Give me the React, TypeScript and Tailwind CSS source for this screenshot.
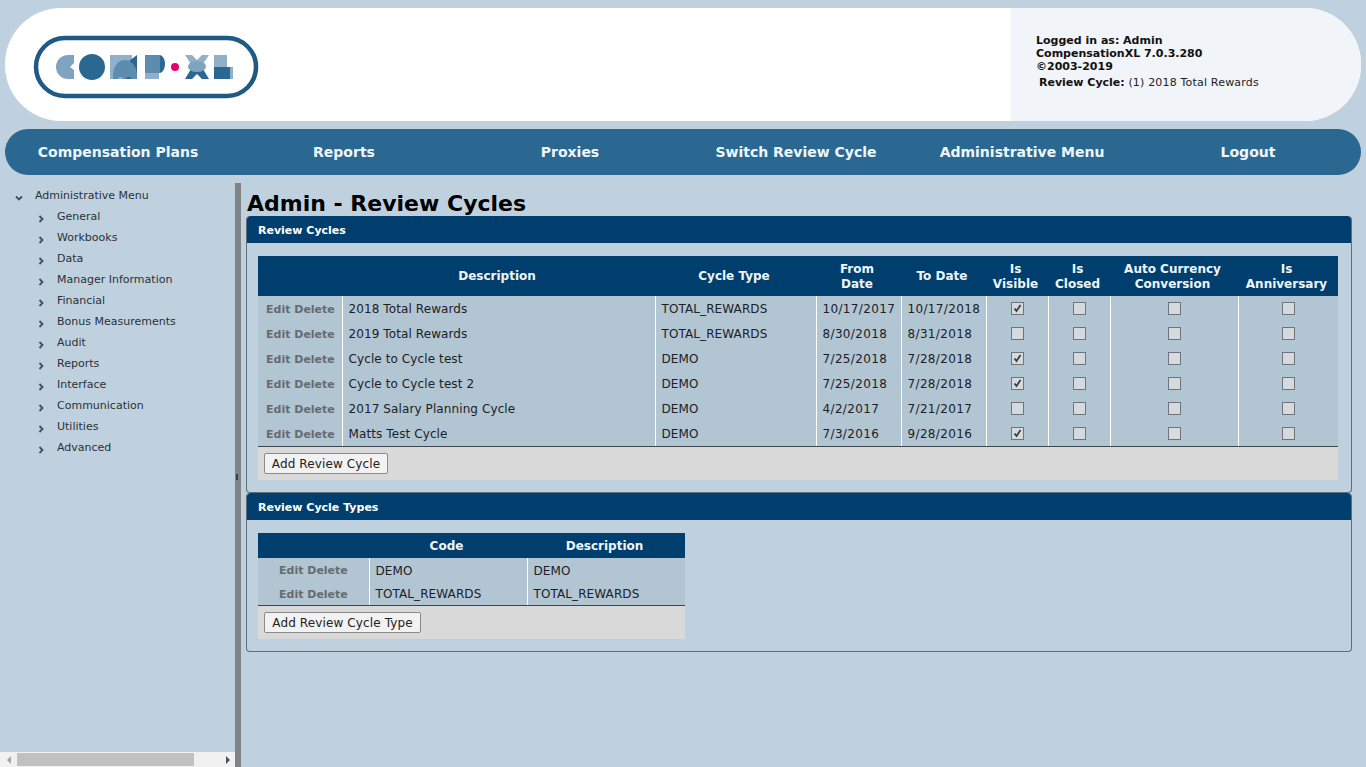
import React from "react";

const font = { fontFamily: '"DejaVu Sans", Verdana, sans-serif' };

function Logo() {
  return (
    <svg width="226" height="64" viewBox="33 35 226 64" className="block">
      <rect x="36" y="38" width="220" height="58" rx="29" fill="#fff" stroke="#1f5a85" strokeWidth="4.5" />
      {/* C */}
      <path d="M68 55h6v8l-4 4 4 3v9h-6a12 12 0 0 1 0-24z" fill="#7ea4bf" />
      {/* O */}
      <circle cx="92" cy="67" r="13" fill="#2b6891" />
      {/* M */}
      <rect x="110" y="55" width="22" height="24" fill="#8fb0c8" />
      <path d="M137 55v24h-12v-15z" fill="#2b6891" />
      <path d="M113 79v-4a12 15 0 0 1 24 0v4h-6l-1-2h-3l-1 2h-3l-1-2h-3l-1 2z" fill="#5c8cae" />
      {/* P */}
      <rect x="145" y="55" width="15" height="18" fill="#5c8cae" />
      <path d="M160 55a6 9 0 0 1 5 9a6 9 0 0 1-5 9z" fill="#2b6891" />
      <rect x="145" y="73" width="14" height="6" fill="#8fb0c8" />
      {/* dot */}
      <circle cx="175" cy="67" r="4" fill="#e6006e" />
      {/* X */}
      <path d="M185 55h7l5 5 5-5h7l-6 9h-12z" fill="#8fb0c8" />
      <path d="M185 79l6-10h12l6 10h-7l-5-5-5 5z" fill="#2b6891" />
      <ellipse cx="197" cy="66.500" rx="9" ry="5.500" fill="#7ea4bf" />
      {/* L */}
      <rect x="214" y="55" width="13" height="12" fill="#8fb0c8" />
      <rect x="214" y="67" width="16" height="12" fill="#2b6891" />
      <rect x="230" y="67" width="3" height="12" fill="#8fb0c8" />
    </svg>
  );
}

function Chevron({ down }: { down?: boolean }) {
  return (
    <svg width="8" height="8" viewBox="0 0 8 8" className="block">
      <path
        d={down ? "M1 2.500 L4 5.500 L7 2.500" : "M2.500 1 L5.500 4 L2.500 7"}
        fill="none"
        stroke="#444f57"
        strokeWidth="1.800"
      />
    </svg>
  );
}

const menu = [
  "General",
  "Workbooks",
  "Data",
  "Manager Information",
  "Financial",
  "Bonus Measurements",
  "Audit",
  "Reports",
  "Interface",
  "Communication",
  "Utilities",
  "Advanced",
];

function Box({ on }: { on?: boolean }) {
  return (
    <span className="inline-flex h-[13px] w-[13px] items-center justify-center border border-[#6f767b] bg-[#d5dade] align-middle">
      {on && (
        <svg width="11" height="11" viewBox="0 0 11 11" className="block">
          <path d="M2.500 5.500 L4.500 8 L8.500 2" fill="none" stroke="#3c3c3c" strokeWidth="1.800" />
        </svg>
      )}
    </span>
  );
}

const rows: [string, string, string, string, boolean][] = [
  ["2018 Total Rewards", "TOTAL_REWARDS", "10/17/2017", "10/17/2018", true],
  ["2019 Total Rewards", "TOTAL_REWARDS", "8/30/2018", "8/31/2018", false],
  ["Cycle to Cycle test", "DEMO", "7/25/2018", "7/28/2018", true],
  ["Cycle to Cycle test 2", "DEMO", "7/25/2018", "7/28/2018", true],
  ["2017 Salary Planning Cycle", "DEMO", "4/2/2017", "7/21/2017", false],
  ["Matts Test Cycle", "DEMO", "7/3/2016", "9/28/2016", true],
];

function Panel({ title, children }: { title: string; children: React.ReactNode }) {
  return (
    <section className="rounded-[4px] border border-[#5f6f7a] border-t-0">
      <h2 className="flex h-[27px] items-center rounded-t-[4px] bg-[#003f6d] pt-[3px] pl-[11px] text-[11px] font-bold text-white">
        {title}
      </h2>
      {children}
    </section>
  );
}

const th = "bg-[#003f6d] p-0 pt-[1px] pr-[3px] text-center text-[12px] leading-[15px] font-bold text-[#eef6fb]";
const td = "border-l border-white pt-[2px] pl-[6px] text-[12px] leading-[15px] tracking-[0.1px] text-[#1c2126]";
const tdDate = "border-l border-white pt-[2px] pl-[6px] text-[12px] leading-[15px] tracking-[0.35px] text-[#1c2126]";
const tdBox = "border-l border-white pb-[2px] text-center leading-[15px]";
const tdEdit = "pb-[1px] pl-[8px] leading-[15px]";
const tdEdit2 = "pb-[1px] pl-[21px] leading-[15px]";

function EditDelete() {
  return <span className="text-[11px] font-bold text-[#666b70]">Edit Delete</span>;
}

function AddButton({ label, w }: { label: string; w: string }) {
  return (
    <button
      className={`h-[21px] ${w} rounded-[2px] border border-[#8a8a8a] bg-[#f2f2f2] text-center text-[12px] tracking-[0.12px] text-[#222]`}
    >
      {label}
    </button>
  );
}

export default function App() {
  return (
    <div style={font} className="flex h-[767px] w-[1366px] flex-col overflow-hidden bg-[#bfd1de] pt-2">
      <header className="mx-[5px] flex h-[113px] shrink-0 overflow-hidden rounded-[56px] bg-white">
        <div className="flex flex-1 items-center pt-[4px] pl-[28px]">
          <Logo />
        </div>
        <div className="flex w-[350px] flex-col justify-center bg-[#f1f4f8] pb-[7px] pl-[25px] text-[11px] text-[#111]">
          <div className="leading-[13px] font-bold">Logged in as: Admin</div>
          <div className="leading-[13px] font-bold">CompensationXL 7.0.3.280</div>
          <div className="leading-[13px] font-bold">©2003-2019</div>
          <div className="mt-[3px] pl-[3px] leading-[13px] tracking-[0.18px] text-[#222]">
            <b className="tracking-normal text-[#111]">Review Cycle:</b> (1) 2018 Total Rewards
          </div>
        </div>
      </header>

      <nav className="mx-[5px] mt-2 grid h-[46px] shrink-0 grid-cols-6 items-center rounded-[23px] bg-[#2b6891] text-center text-[14px] font-bold text-[#eef7fc]">
        {["Compensation Plans", "Reports", "Proxies", "Switch Review Cycle", "Administrative Menu", "Logout"].map((n) => (
          <a key={n}>{n}</a>
        ))}
      </nav>

      <div className="mt-2 flex min-h-0 flex-1">
        <aside className="flex w-[235px] shrink-0 flex-col">
          <div className="flex-1 pt-[3px] text-[11px] text-[#2a3238]">
            <div className="flex h-[21px] items-center pl-[15px]">
              <span className="mt-[2px] w-[20px]">
                <Chevron down />
              </span>
              Administrative Menu
            </div>
            {menu.map((m) => (
              <div key={m} className="flex h-[21px] items-center pl-[37px]">
                <span className="mt-[2px] w-[20px]">
                  <Chevron />
                </span>
                {m}
              </div>
            ))}
          </div>
          <div className="flex h-[15px] shrink-0 items-center bg-[#f1f1f1]">
            <span className="flex w-[17px] justify-center">
              <span className="h-0 w-0 border-y-[4px] border-r-[4px] border-y-transparent border-r-[#a3a3a3]" />
            </span>
            <span className="h-[13px] w-[177px] bg-[#c1c1c1]" />
            <span className="flex flex-1 justify-end pr-[5px]">
              <span className="h-0 w-0 border-y-[4px] border-l-[4px] border-y-transparent border-l-[#505050]" />
            </span>
          </div>
        </aside>

        <div className="relative w-[6px] shrink-0 bg-[#808487]">
          <span className="absolute left-[1px] top-[291px] h-[6px] w-[2px] bg-[#3c4043]" />
        </div>

        <main className="min-w-0 flex-1 pl-[5px] pr-[14px]">
          <h1 className="h-[33px] pt-[7px] pl-[1px] text-[22px] leading-[28px] font-bold text-black">Admin - Review Cycles</h1>

          <Panel title="Review Cycles">
            <div className="px-[11px] pt-[13px] pb-[12px]">
              <table className="w-[1080px] table-fixed border-collapse">
                <colgroup>
                  <col className="w-[84px]" />
                  <col className="w-[313px]" />
                  <col className="w-[161px]" />
                  <col className="w-[85px]" />
                  <col className="w-[85px]" />
                  <col className="w-[62px]" />
                  <col className="w-[62px]" />
                  <col className="w-[128px]" />
                  <col className="w-[100px]" />
                </colgroup>
                <thead>
                  <tr className="h-[40px]">
                    <th className={th}></th>
                    <th className={th}>Description</th>
                    <th className={th}>Cycle Type</th>
                    <th className={th}>From<br />Date</th>
                    <th className={th}>To Date</th>
                    <th className={th}>Is<br />Visible</th>
                    <th className={th}>Is<br />Closed</th>
                    <th className={th}>Auto Currency<br />Conversion</th>
                    <th className={th}>Is<br />Anniversary</th>
                  </tr>
                </thead>
                <tbody className="bg-[#b2c5d3]">
                  {rows.map((r) => (
                    <tr key={r[0]} className="h-[25px]">
                      <td className={tdEdit}><EditDelete /></td>
                      <td className={td}>{r[0]}</td>
                      <td className={td}>{r[1]}</td>
                      <td className={tdDate}>{r[2]}</td>
                      <td className={tdDate}>{r[3]}</td>
                      <td className={tdBox}><Box on={r[4]} /></td>
                      <td className={tdBox}><Box /></td>
                      <td className={tdBox}><Box /></td>
                      <td className={tdBox}><Box /></td>
                    </tr>
                  ))}
                </tbody>
              </table>
              <div className="flex h-[34px] w-[1080px] items-center border-t border-[#3d464d] bg-[#d9d9d9] pl-[6px]">
                <AddButton label="Add Review Cycle" w="w-[124px]" />
              </div>
            </div>
          </Panel>

          <Panel title="Review Cycle Types">
            <div className="px-[11px] pt-[13px] pb-[12px]">
              <table className="w-[427px] table-fixed border-collapse">
                <colgroup>
                  <col className="w-[111px]" />
                  <col className="w-[158px]" />
                  <col className="w-[158px]" />
                </colgroup>
                <thead>
                  <tr className="h-[25px]">
                    <th className={th}></th>
                    <th className={th}>Code</th>
                    <th className={th}>Description</th>
                  </tr>
                </thead>
                <tbody className="bg-[#b2c5d3]">
                  <tr className="h-[24px]">
                    <td className={tdEdit2}><EditDelete /></td>
                    <td className={td}>DEMO</td>
                    <td className={td}>DEMO</td>
                  </tr>
                  <tr className="h-[23px]">
                    <td className={tdEdit2}><EditDelete /></td>
                    <td className={td}>TOTAL_REWARDS</td>
                    <td className={td}>TOTAL_REWARDS</td>
                  </tr>
                </tbody>
              </table>
              <div className="flex h-[34px] w-[427px] items-center border-t border-[#3d464d] bg-[#d9d9d9] pl-[6px]">
                <AddButton label="Add Review Cycle Type" w="w-[157px]" />
              </div>
            </div>
          </Panel>
        </main>
      </div>
    </div>
  );
}
